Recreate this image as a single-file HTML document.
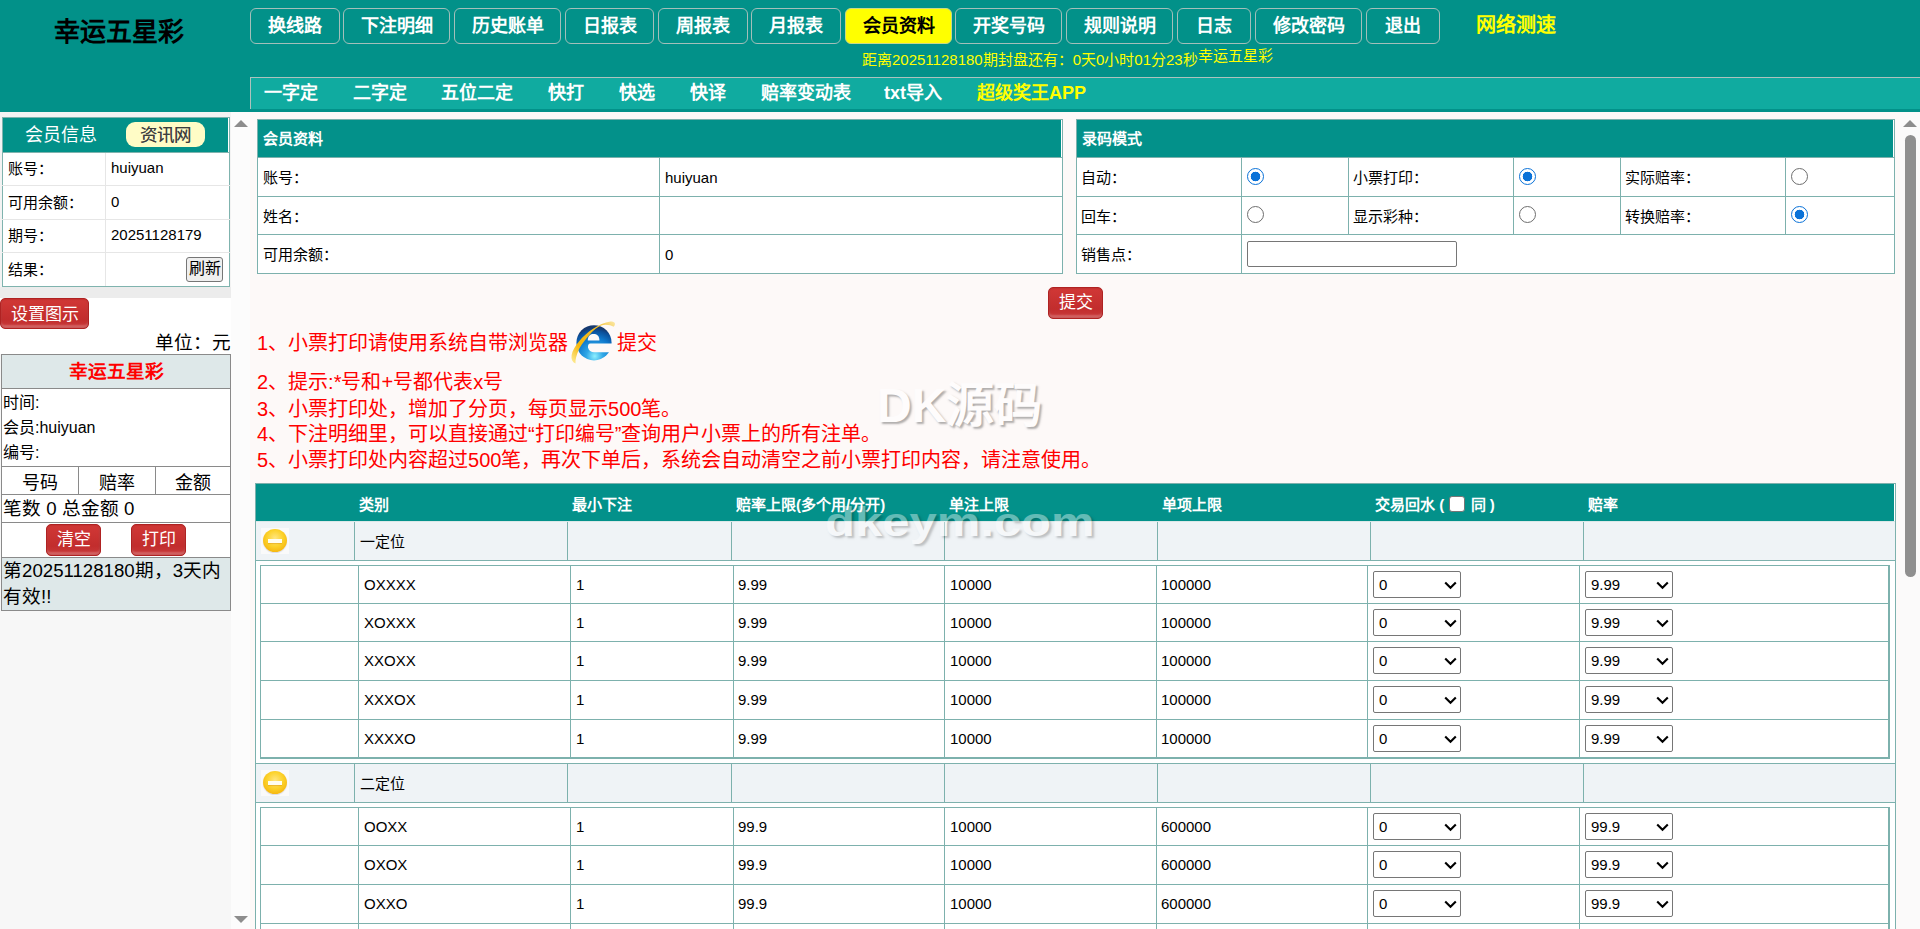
<!DOCTYPE html>
<html lang="zh-CN"><head><meta charset="utf-8">
<style>
*{box-sizing:border-box}
html,body{margin:0;padding:0}
body{width:1920px;height:929px;overflow:hidden;position:relative;font-family:"Liberation Sans",sans-serif;background:#fdf9f8;color:#000}
.abs{position:absolute}
#hd{position:absolute;left:0;top:0;width:1920px;height:112px;background:#029189}
#logo{position:absolute;left:54px;top:15px;font-size:26px;font-weight:bold;line-height:34px;color:#000;white-space:nowrap}
.nb{position:absolute;top:8px;height:36px;border:1px solid #a3bfba;border-radius:6px;color:#fff;font-weight:bold;font-size:18px;line-height:34px;text-align:center;white-space:nowrap}
.nb.on{background:#ffff00;color:#000;border-color:#c8d88a}
#speed{position:absolute;left:1476px;top:10px;font-size:20px;font-weight:bold;color:#ffff00;line-height:30px;white-space:nowrap}
#cd{position:absolute;left:862px;top:49px;font-size:15px;color:#ffff00;line-height:22px;white-space:nowrap}
#cd2{position:absolute;left:1198px;top:45px;font-size:15px;color:#ffff00;line-height:22px;white-space:nowrap}
#sub{position:absolute;left:250px;top:77px;width:1670px;height:32px;background:#10aba0;border-top:1px solid #adc2bd;border-left:1px solid #adc2bd}
.sn{position:absolute;top:4px;font-size:18px;font-weight:bold;color:#fff;line-height:22px;white-space:nowrap}

#side{position:absolute;left:0;top:112px;width:250px;height:817px;background:#f7f7f7}
#mi{position:absolute;left:0;top:0;width:231px;height:186px;background:#f3f3f3}
.mt{position:absolute;left:2px;top:5px;width:228px;border-collapse:collapse;font-size:15px;table-layout:fixed}
.mt td{padding:0}
.mt tr.h td{background:#029189;height:35px;border:1px solid #7fb3ae;position:relative;box-shadow:inset -1px 0 #fff}
.mt .t{position:absolute;left:22px;top:6px;font-size:18px;color:#fff;line-height:22px}
.mt .zx{position:absolute;left:123px;top:4px;width:79px;height:25px;background:#fffcc6;border-radius:9px;color:#3d3d3d;font-size:17.5px;line-height:27px;text-align:center;letter-spacing:-0.3px;text-shadow:0 0 .5px #777}
.mt td.l,.mt td.r{background:#fff;border:1px solid #e6e6e6;position:relative;padding-bottom:3px}
.mt tr.r1 td{height:33px}.mt tr.r2 td{height:34px}.mt tr.r3 td{height:33px}.mt tr.r4 td{height:34px}
.mt td.l{width:92px;padding-left:5px;border-left:1px solid #7fb3ae}
.mt td.r{padding-left:5px;border-right:1px solid #7fb3ae}
.mt tr.r4 td.l,.mt tr.r4 td.r{border-bottom:1px solid #7fb3ae}
.rf{position:absolute;right:6px;top:4px;width:37px;height:25px;background:#efefef;border:1px solid #767676;border-radius:3px;font-size:16px;line-height:22px;text-align:center}
#band{position:absolute;left:0;top:175px;width:231px;height:11px;background:#ececec}
#wbg{position:absolute;left:0;top:186px;width:231px;height:56px;background:#fff}
.rbtn{position:absolute;background:linear-gradient(#d13836,#c22d2d 70%,#c93a3a);border:1px solid #b02222;border-radius:5px;color:#fff;text-align:center;box-shadow:inset 0 0 2px rgba(90,0,0,.35),inset 0 -3px 2px rgba(255,255,255,.22)}
#setbtn{left:0;top:186px;width:89px;height:31px;font-size:17px;line-height:31px}
#unit{position:absolute;left:140px;top:219px;width:91px;text-align:right;font-size:18.67px;line-height:24px;white-space:nowrap}
#tk{position:absolute;left:1px;top:242px;width:230px;border-collapse:collapse;background:#fff;table-layout:fixed}
#tk td{border:1px solid #8a8a8a;padding:0}
#tk tr.tt td{height:34px;padding-bottom:4px;background:#dee8e9;color:#f00;font-weight:bold;font-size:18.67px;text-align:center}
#tk tr.inf td{height:78px;font-size:16px;padding-left:1px;line-height:25px}
#tk tr.cols td{height:28px;font-size:18px;text-align:center}
#tk tr.sum td{height:28px;font-size:18.67px;padding-left:1px;line-height:22px;padding-top:1px}
#tk tr.btns td{height:35px;position:relative}
#tk .btns .rbtn{top:1px;width:55px;height:32px;font-size:17px;line-height:30px}
#tk tr.last td{height:52px;background:#dee8e9;font-size:18.67px;line-height:26px;padding-left:1px}
#sb1{position:absolute;left:231px;top:0;width:19px;height:817px;background:#fcfcfc}
.up{position:absolute;left:3px;top:8px;width:0;height:0;border-left:7px solid transparent;border-right:7px solid transparent;border-bottom:7px solid #8d8d8d}
.dn{position:absolute;left:3px;top:804px;width:0;height:0;border-left:7px solid transparent;border-right:7px solid transparent;border-top:7px solid #8d8d8d}

#main{position:absolute;left:0;top:0;width:1920px;height:929px;pointer-events:none}
.a{position:absolute}
.tx{position:absolute;white-space:nowrap}
.hdt{height:38px;line-height:38px;font-size:15px;font-weight:bold;color:#fff}
.ct{height:38px;line-height:40px;font-size:15px}
.note{font-size:20px;color:#f00;line-height:30px}
.ght{height:37px;line-height:41px;font-size:15px;font-weight:bold;color:#fff}
.gt{font-size:15px}
.it{font-size:15px}
.cb{display:inline-block;width:16px;height:16px;background:#fff;border:1px solid #767676;border-radius:3px;vertical-align:-2px;margin:0 1px}
.gico{position:absolute;width:28px;height:26px;background:#fafafa}
.gico:before{content:"";position:absolute;left:2px;top:1px;width:24px;height:23px;border-radius:50%;background:radial-gradient(circle at 50% 40%,#ffe680 0,#fcd22a 45%,#f6b812 75%,#eea60c 92%,#f4c25a 100%);box-shadow:0 1px 1px rgba(120,120,160,.25)}
.gico:after{content:"";position:absolute;left:7px;top:11px;width:14px;height:4px;background:#fffdf0;box-shadow:0 1px 1px rgba(200,120,0,.35)}
.radio{position:absolute;width:17px;height:17px;border-radius:50%;border:1.8px solid #6e6e6e;background:#fff}
.radio.on{border:1.7px solid #0a72d8;background:radial-gradient(circle,#0a72d8 0 4.6px,#fff 5.1px)}
.inp{position:absolute;width:210px;height:26px;border:1px solid #767676;border-radius:2px;background:#fff}
.sel{position:absolute;width:88px;height:27px;border:1px solid #767676;border-radius:2px;background:#fff;font-size:15px;line-height:25px;padding-left:5px}
.chev{position:absolute;left:70px;top:9px}
#ie{position:absolute;width:44px;height:44px}
#sb2{position:absolute;left:1900px;top:112px;width:20px;height:817px;background:#fbfafa}
.up2{position:absolute;left:3px;top:8px;width:0;height:0;border-left:7px solid transparent;border-right:7px solid transparent;border-bottom:7px solid #8d8d8d}
.thumb{position:absolute;left:5px;top:23px;width:11px;height:442px;border-radius:6px;background:#8f8f8f}
#wm1{position:absolute;left:877px;top:376px;font-size:48px;line-height:60px;font-weight:bold;color:#fff;opacity:.6;text-shadow:2px 2px 2px rgba(0,0,0,.5);white-space:nowrap}
#wm2{position:absolute;left:825px;top:496px;font-size:40px;line-height:52px;font-weight:bold;color:#fff;opacity:.38;text-shadow:2px 2px 2px rgba(0,0,0,.55);white-space:nowrap;transform:scaleX(1.225);transform-origin:0 0}
</style></head><body>
<div id="hd">
  <div id="logo">幸运五星彩</div>
  <div class="nb" style="left:250px;width:90px">换线路</div>
  <div class="nb" style="left:343px;width:107px">下注明细</div>
  <div class="nb" style="left:454px;width:107px">历史账单</div>
  <div class="nb" style="left:565px;width:89px">日报表</div>
  <div class="nb" style="left:658px;width:90px">周报表</div>
  <div class="nb" style="left:751px;width:90px">月报表</div>
  <div class="nb on" style="left:845px;width:107px">会员资料</div>
  <div class="nb" style="left:955px;width:107px">开奖号码</div>
  <div class="nb" style="left:1066px;width:107px">规则说明</div>
  <div class="nb" style="left:1177px;width:74px">日志</div>
  <div class="nb" style="left:1255px;width:107px">修改密码</div>
  <div class="nb" style="left:1366px;width:74px">退出</div>
  <div id="speed">网络测速</div>
  <div id="cd">距离20251128180期封盘还有：0天0小时01分23秒</div>
  <div id="cd2">幸运五星彩</div>
  <div id="sub">
    <div class="sn" style="left:13px">一字定</div>
    <div class="sn" style="left:102px">二字定</div>
    <div class="sn" style="left:190px">五位二定</div>
    <div class="sn" style="left:297px">快打</div>
    <div class="sn" style="left:368px">快选</div>
    <div class="sn" style="left:439px">快译</div>
    <div class="sn" style="left:510px">赔率变动表</div>
    <div class="sn" style="left:633px">txt导入</div>
    <div class="sn" style="left:726px;color:#ffff00">超级奖王APP</div>
  </div>
</div>
<div id="side">
  <div id="mi">
    <table class="mt"><col style="width:103px"><col>
      <tr class="h"><td colspan="2"><span class="t">会员信息</span><span class="zx">资讯网</span></td></tr>
      <tr class="r1"><td class="l">账号：</td><td class="r">huiyuan</td></tr>
      <tr class="r2"><td class="l">可用余额：</td><td class="r">0</td></tr>
      <tr class="r3"><td class="l">期号：</td><td class="r">20251128179</td></tr>
      <tr class="r4"><td class="l">结果：</td><td class="r"><span class="rf">刷新</span></td></tr>
    </table>
  </div>
  <div id="band"></div>
  <div id="wbg"></div>
  <div id="setbtn" class="rbtn">设置图示</div>
  <div id="unit">单位：元</div>
  <table id="tk"><col style="width:77px"><col style="width:77px"><col>
    <tr class="tt"><td colspan="3">幸运五星彩</td></tr>
    <tr class="inf"><td colspan="3"><div>时间:</div><div>会员:huiyuan</div><div>编号:</div></td></tr>
    <tr class="cols"><td>号码</td><td>赔率</td><td>金额</td></tr>
    <tr class="sum"><td colspan="3">笔数 0 总金额 0</td></tr>
    <tr class="btns"><td colspan="3"><span class="rbtn" style="left:44px">清空</span><span class="rbtn" style="left:129px">打印</span></td></tr>
    <tr class="last"><td colspan="3">第20251128180期，3天内有效!!</td></tr>
  </table>
  <div id="sb1"><div class="up"></div><div class="dn"></div></div>
</div>

<div id="main">
<div class="a" style="left:257px;top:119px;width:806px;height:155px;background:#fff;"></div>
<div class="a" style="left:258px;top:120px;width:804px;height:37px;background:#03918a;"></div>
<div class="a" style="left:1061px;top:120px;width:1px;height:37px;background:#ffffff;"></div>
<div class="a" style="left:257px;top:119px;width:806px;height:1px;background:#7db1ad;"></div>
<div class="a" style="left:257px;top:157px;width:806px;height:1px;background:#7db1ad;"></div>
<div class="a" style="left:257px;top:196px;width:806px;height:1px;background:#7db1ad;"></div>
<div class="a" style="left:257px;top:234px;width:806px;height:1px;background:#7db1ad;"></div>
<div class="a" style="left:257px;top:273px;width:806px;height:1px;background:#7db1ad;"></div>
<div class="a" style="left:257px;top:119px;width:1px;height:155px;background:#7db1ad;"></div>
<div class="a" style="left:1062px;top:119px;width:1px;height:155px;background:#7db1ad;"></div>
<div class="a" style="left:659px;top:157px;width:1px;height:117px;background:#7db1ad;"></div>
<div class="tx hdt" style="left:263px;top:120px;">会员资料</div>
<div class="tx ct" style="left:263px;top:158px;">账号：</div>
<div class="tx ct" style="left:665px;top:158px;">huiyuan</div>
<div class="tx ct" style="left:263px;top:197px;">姓名：</div>
<div class="tx ct" style="left:665px;top:197px;"></div>
<div class="tx ct" style="left:263px;top:235px;">可用余额：</div>
<div class="tx ct" style="left:665px;top:235px;">0</div>
<div class="a" style="left:1076px;top:119px;width:819px;height:155px;background:#fff;"></div>
<div class="a" style="left:1077px;top:120px;width:817px;height:37px;background:#03918a;"></div>
<div class="a" style="left:1893px;top:120px;width:1px;height:37px;background:#ffffff;"></div>
<div class="a" style="left:1076px;top:119px;width:819px;height:1px;background:#7db1ad;"></div>
<div class="a" style="left:1076px;top:157px;width:819px;height:1px;background:#7db1ad;"></div>
<div class="a" style="left:1076px;top:196px;width:819px;height:1px;background:#7db1ad;"></div>
<div class="a" style="left:1076px;top:234px;width:819px;height:1px;background:#7db1ad;"></div>
<div class="a" style="left:1076px;top:273px;width:819px;height:1px;background:#7db1ad;"></div>
<div class="a" style="left:1076px;top:119px;width:1px;height:155px;background:#7db1ad;"></div>
<div class="a" style="left:1894px;top:119px;width:1px;height:155px;background:#7db1ad;"></div>
<div class="a" style="left:1241px;top:157px;width:1px;height:117px;background:#7db1ad;"></div>
<div class="a" style="left:1348px;top:157px;width:1px;height:77px;background:#7db1ad;"></div>
<div class="a" style="left:1513px;top:157px;width:1px;height:77px;background:#7db1ad;"></div>
<div class="a" style="left:1620px;top:157px;width:1px;height:77px;background:#7db1ad;"></div>
<div class="a" style="left:1785px;top:157px;width:1px;height:77px;background:#7db1ad;"></div>
<div class="tx hdt" style="left:1082px;top:120px;">录码模式</div>
<div class="tx ct" style="left:1081px;top:158px;">自动：</div>
<div class="radio on" style="left:1247px;top:168px"></div>
<div class="tx ct" style="left:1353px;top:158px;">小票打印：</div>
<div class="radio on" style="left:1519px;top:168px"></div>
<div class="tx ct" style="left:1625px;top:158px;">实际赔率：</div>
<div class="radio" style="left:1791px;top:168px"></div>
<div class="tx ct" style="left:1081px;top:197px;">回车：</div>
<div class="radio" style="left:1247px;top:206px"></div>
<div class="tx ct" style="left:1353px;top:197px;">显示彩种：</div>
<div class="radio" style="left:1519px;top:206px"></div>
<div class="tx ct" style="left:1625px;top:197px;">转换赔率：</div>
<div class="radio on" style="left:1791px;top:206px"></div>
<div class="tx ct" style="left:1081px;top:235px;">销售点：</div>
<div class="inp" style="left:1247px;top:241px"></div>
<div class="rbtn" style="left:1048px;top:287px;width:55px;height:32px;font-size:17px;line-height:29px">提交</div>
<div class="tx note" style="left:257px;top:328px;">1、小票打印请使用系统自带浏览器</div>
<div class="tx note" style="left:617px;top:328px;">提交</div>
<div id="ie" style="left:569px;top:320px"><svg width="47" height="46" viewBox="0 0 47 46">
<defs>
<radialGradient id="gb" cx="0.52" cy="0.88" r="0.8"><stop offset="0" stop-color="#8ef0ff"/><stop offset="0.3" stop-color="#2fa6e6"/><stop offset="0.65" stop-color="#0f78cc"/><stop offset="0.9" stop-color="#0b4f9a"/><stop offset="1" stop-color="#163a70"/></radialGradient>
<linearGradient id="gy" x1="0" y1="1" x2="1" y2="0"><stop offset="0" stop-color="#fff0a0"/><stop offset="0.3" stop-color="#f6b70c"/><stop offset="0.7" stop-color="#f4bb22"/><stop offset="1" stop-color="#fbe9a8"/></linearGradient>
</defs>
<circle cx="25" cy="22.8" r="17.6" fill="url(#gb)"/>
<path d="M18.8 20.4 C18.8 15.5 21.5 13.9 24.6 13.9 C27.8 13.9 30.4 15.5 30.4 20.4 Z" fill="#fdf9f8"/>
<path d="M43 23.6 L21.5 23.6 C19.2 23.6 18.8 25.5 19 27.5 C19.5 30.5 22 32.2 25.5 32.2 L43 32.2 L43 23.6 Z" fill="#fdf9f8"/>
<path d="M6.5 43.5 C0 41 1.5 31 10.4 21 C17 13 30 3 41.4 1.6 C44 1.3 46.5 2.5 45.9 4.6 C45.5 6 44.6 6.8 44.6 6.8 C42 5 36 4 32.3 5.5 C26 8 22.5 12.5 19.5 16 C14 22.5 11 27 9.7 30 C7.5 35 6.2 40 6.5 43.5 Z" fill="url(#gy)"/>
</svg></div>
<div class="tx note" style="left:257px;top:367px;">2、提示:*号和+号都代表x号</div>
<div class="tx note" style="left:257px;top:394px;">3、小票打印处，增加了分页，每页显示500笔。</div>
<div class="tx note" style="left:257px;top:419px;">4、下注明细里，可以直接通过“打印编号”查询用户小票上的所有注单。</div>
<div class="tx note" style="left:257px;top:445px;">5、小票打印处内容超过500笔，再次下单后，系统会自动清空之前小票打印内容，请注意使用。</div>
<div class="a" style="left:255px;top:483px;width:1641px;height:38px;background:#03918a;"></div>
<div class="a" style="left:255px;top:483px;width:1641px;height:1px;background:#7db1ad;"></div>
<div class="a" style="left:255px;top:483px;width:1px;height:446px;background:#7db1ad;"></div>
<div class="a" style="left:1895px;top:483px;width:1px;height:446px;background:#7db1ad;"></div>
<div class="a" style="left:1894px;top:484px;width:1px;height:37px;background:#ffffff;"></div>
<div class="tx ght" style="left:359px;top:484px;">类别</div>
<div class="tx ght" style="left:572px;top:484px;">最小下注</div>
<div class="tx ght" style="left:736px;top:484px;">赔率上限(多个用/分开)</div>
<div class="tx ght" style="left:949px;top:484px;">单注上限</div>
<div class="tx ght" style="left:1162px;top:484px;">单项上限</div>
<div class="tx ght" style="left:1375px;top:484px;">交易回水 ( <span class="cb"></span> 同 )</div>
<div class="tx ght" style="left:1588px;top:484px;">赔率</div>
<div class="a" style="left:256px;top:561px;width:1639px;height:368px;background:#fff;"></div>
<div class="a" style="left:256px;top:521px;width:1639px;height:1px;background:#dbe8e8;"></div>
<div class="a" style="left:256px;top:522px;width:1639px;height:38px;background:#eff3f6;"></div>
<div class="a" style="left:255px;top:560px;width:1641px;height:1px;background:#7db1ad;"></div>
<div class="a" style="left:354px;top:522px;width:1px;height:38px;background:#7db1ad;"></div>
<div class="a" style="left:567px;top:522px;width:1px;height:38px;background:#7db1ad;"></div>
<div class="a" style="left:731px;top:522px;width:1px;height:38px;background:#7db1ad;"></div>
<div class="a" style="left:944px;top:522px;width:1px;height:38px;background:#7db1ad;"></div>
<div class="a" style="left:1157px;top:522px;width:1px;height:38px;background:#7db1ad;"></div>
<div class="a" style="left:1370px;top:522px;width:1px;height:38px;background:#7db1ad;"></div>
<div class="a" style="left:1583px;top:522px;width:1px;height:38px;background:#7db1ad;"></div>
<div class="gico" style="left:261px;top:528px"></div>
<div class="tx gt" style="left:360px;top:522px;height:38px;line-height:40px">一定位</div>
<div class="a" style="left:260px;top:565px;width:1630px;height:194px;background:#fff;"></div>
<div class="a" style="left:260px;top:565px;width:1630px;height:1px;background:#7db1ad;"></div>
<div class="a" style="left:260px;top:565px;width:1px;height:194px;background:#7db1ad;"></div>
<div class="a" style="left:1888px;top:565px;width:2px;height:194px;background:#7db1ad;"></div>
<div class="a" style="left:260px;top:603px;width:1630px;height:1px;background:#7db1ad;"></div>
<div class="a" style="left:260px;top:641px;width:1630px;height:1px;background:#7db1ad;"></div>
<div class="a" style="left:260px;top:680px;width:1630px;height:1px;background:#7db1ad;"></div>
<div class="a" style="left:260px;top:719px;width:1630px;height:1px;background:#7db1ad;"></div>
<div class="a" style="left:260px;top:757px;width:1630px;height:2px;background:#7db1ad;"></div>
<div class="a" style="left:358px;top:565px;width:1px;height:192px;background:#7db1ad;"></div>
<div class="a" style="left:570px;top:565px;width:1px;height:192px;background:#7db1ad;"></div>
<div class="a" style="left:733px;top:565px;width:1px;height:192px;background:#7db1ad;"></div>
<div class="a" style="left:944px;top:565px;width:1px;height:192px;background:#7db1ad;"></div>
<div class="a" style="left:1156px;top:565px;width:1px;height:192px;background:#7db1ad;"></div>
<div class="a" style="left:1367px;top:565px;width:1px;height:192px;background:#7db1ad;"></div>
<div class="a" style="left:1579px;top:565px;width:1px;height:192px;background:#7db1ad;"></div>
<div class="tx it" style="left:364px;top:566px;height:37px;line-height:37px">OXXXX</div>
<div class="tx it" style="left:576px;top:566px;height:37px;line-height:37px">1</div>
<div class="tx it" style="left:738px;top:566px;height:37px;line-height:37px">9.99</div>
<div class="tx it" style="left:950px;top:566px;height:37px;line-height:37px">10000</div>
<div class="tx it" style="left:1161px;top:566px;height:37px;line-height:37px">100000</div>
<div class="sel" style="left:1373px;top:571px">0<svg class="chev" width="13" height="9" viewBox="0 0 13 9"><path d="M1.2 1.5 L6.5 6.8 L11.8 1.5" fill="none" stroke="#000" stroke-width="2.1"/></svg></div>
<div class="sel" style="left:1585px;top:571px">9.99<svg class="chev" width="13" height="9" viewBox="0 0 13 9"><path d="M1.2 1.5 L6.5 6.8 L11.8 1.5" fill="none" stroke="#000" stroke-width="2.1"/></svg></div>
<div class="tx it" style="left:364px;top:604px;height:37px;line-height:37px">XOXXX</div>
<div class="tx it" style="left:576px;top:604px;height:37px;line-height:37px">1</div>
<div class="tx it" style="left:738px;top:604px;height:37px;line-height:37px">9.99</div>
<div class="tx it" style="left:950px;top:604px;height:37px;line-height:37px">10000</div>
<div class="tx it" style="left:1161px;top:604px;height:37px;line-height:37px">100000</div>
<div class="sel" style="left:1373px;top:609px">0<svg class="chev" width="13" height="9" viewBox="0 0 13 9"><path d="M1.2 1.5 L6.5 6.8 L11.8 1.5" fill="none" stroke="#000" stroke-width="2.1"/></svg></div>
<div class="sel" style="left:1585px;top:609px">9.99<svg class="chev" width="13" height="9" viewBox="0 0 13 9"><path d="M1.2 1.5 L6.5 6.8 L11.8 1.5" fill="none" stroke="#000" stroke-width="2.1"/></svg></div>
<div class="tx it" style="left:364px;top:642px;height:38px;line-height:38px">XXOXX</div>
<div class="tx it" style="left:576px;top:642px;height:38px;line-height:38px">1</div>
<div class="tx it" style="left:738px;top:642px;height:38px;line-height:38px">9.99</div>
<div class="tx it" style="left:950px;top:642px;height:38px;line-height:38px">10000</div>
<div class="tx it" style="left:1161px;top:642px;height:38px;line-height:38px">100000</div>
<div class="sel" style="left:1373px;top:647px">0<svg class="chev" width="13" height="9" viewBox="0 0 13 9"><path d="M1.2 1.5 L6.5 6.8 L11.8 1.5" fill="none" stroke="#000" stroke-width="2.1"/></svg></div>
<div class="sel" style="left:1585px;top:647px">9.99<svg class="chev" width="13" height="9" viewBox="0 0 13 9"><path d="M1.2 1.5 L6.5 6.8 L11.8 1.5" fill="none" stroke="#000" stroke-width="2.1"/></svg></div>
<div class="tx it" style="left:364px;top:681px;height:38px;line-height:38px">XXXOX</div>
<div class="tx it" style="left:576px;top:681px;height:38px;line-height:38px">1</div>
<div class="tx it" style="left:738px;top:681px;height:38px;line-height:38px">9.99</div>
<div class="tx it" style="left:950px;top:681px;height:38px;line-height:38px">10000</div>
<div class="tx it" style="left:1161px;top:681px;height:38px;line-height:38px">100000</div>
<div class="sel" style="left:1373px;top:686px">0<svg class="chev" width="13" height="9" viewBox="0 0 13 9"><path d="M1.2 1.5 L6.5 6.8 L11.8 1.5" fill="none" stroke="#000" stroke-width="2.1"/></svg></div>
<div class="sel" style="left:1585px;top:686px">9.99<svg class="chev" width="13" height="9" viewBox="0 0 13 9"><path d="M1.2 1.5 L6.5 6.8 L11.8 1.5" fill="none" stroke="#000" stroke-width="2.1"/></svg></div>
<div class="tx it" style="left:364px;top:720px;height:37px;line-height:37px">XXXXO</div>
<div class="tx it" style="left:576px;top:720px;height:37px;line-height:37px">1</div>
<div class="tx it" style="left:738px;top:720px;height:37px;line-height:37px">9.99</div>
<div class="tx it" style="left:950px;top:720px;height:37px;line-height:37px">10000</div>
<div class="tx it" style="left:1161px;top:720px;height:37px;line-height:37px">100000</div>
<div class="sel" style="left:1373px;top:725px">0<svg class="chev" width="13" height="9" viewBox="0 0 13 9"><path d="M1.2 1.5 L6.5 6.8 L11.8 1.5" fill="none" stroke="#000" stroke-width="2.1"/></svg></div>
<div class="sel" style="left:1585px;top:725px">9.99<svg class="chev" width="13" height="9" viewBox="0 0 13 9"><path d="M1.2 1.5 L6.5 6.8 L11.8 1.5" fill="none" stroke="#000" stroke-width="2.1"/></svg></div>
<div class="a" style="left:255px;top:763px;width:1641px;height:1px;background:#7db1ad;"></div>
<div class="a" style="left:256px;top:764px;width:1639px;height:38px;background:#eff3f6;"></div>
<div class="a" style="left:255px;top:802px;width:1641px;height:1px;background:#7db1ad;"></div>
<div class="a" style="left:354px;top:764px;width:1px;height:38px;background:#7db1ad;"></div>
<div class="a" style="left:567px;top:764px;width:1px;height:38px;background:#7db1ad;"></div>
<div class="a" style="left:731px;top:764px;width:1px;height:38px;background:#7db1ad;"></div>
<div class="a" style="left:944px;top:764px;width:1px;height:38px;background:#7db1ad;"></div>
<div class="a" style="left:1157px;top:764px;width:1px;height:38px;background:#7db1ad;"></div>
<div class="a" style="left:1370px;top:764px;width:1px;height:38px;background:#7db1ad;"></div>
<div class="a" style="left:1583px;top:764px;width:1px;height:38px;background:#7db1ad;"></div>
<div class="gico" style="left:261px;top:770px"></div>
<div class="tx gt" style="left:360px;top:764px;height:38px;line-height:40px">二定位</div>
<div class="a" style="left:260px;top:807px;width:1630px;height:122px;background:#fff;"></div>
<div class="a" style="left:260px;top:807px;width:1630px;height:1px;background:#7db1ad;"></div>
<div class="a" style="left:260px;top:807px;width:1px;height:156px;background:#7db1ad;"></div>
<div class="a" style="left:1888px;top:807px;width:2px;height:156px;background:#7db1ad;"></div>
<div class="a" style="left:260px;top:845px;width:1630px;height:1px;background:#7db1ad;"></div>
<div class="a" style="left:260px;top:884px;width:1630px;height:1px;background:#7db1ad;"></div>
<div class="a" style="left:260px;top:923px;width:1630px;height:1px;background:#7db1ad;"></div>
<div class="a" style="left:260px;top:961px;width:1630px;height:2px;background:#7db1ad;"></div>
<div class="a" style="left:358px;top:807px;width:1px;height:154px;background:#7db1ad;"></div>
<div class="a" style="left:570px;top:807px;width:1px;height:154px;background:#7db1ad;"></div>
<div class="a" style="left:733px;top:807px;width:1px;height:154px;background:#7db1ad;"></div>
<div class="a" style="left:944px;top:807px;width:1px;height:154px;background:#7db1ad;"></div>
<div class="a" style="left:1156px;top:807px;width:1px;height:154px;background:#7db1ad;"></div>
<div class="a" style="left:1367px;top:807px;width:1px;height:154px;background:#7db1ad;"></div>
<div class="a" style="left:1579px;top:807px;width:1px;height:154px;background:#7db1ad;"></div>
<div class="tx it" style="left:364px;top:808px;height:37px;line-height:37px">OOXX</div>
<div class="tx it" style="left:576px;top:808px;height:37px;line-height:37px">1</div>
<div class="tx it" style="left:738px;top:808px;height:37px;line-height:37px">99.9</div>
<div class="tx it" style="left:950px;top:808px;height:37px;line-height:37px">10000</div>
<div class="tx it" style="left:1161px;top:808px;height:37px;line-height:37px">600000</div>
<div class="sel" style="left:1373px;top:813px">0<svg class="chev" width="13" height="9" viewBox="0 0 13 9"><path d="M1.2 1.5 L6.5 6.8 L11.8 1.5" fill="none" stroke="#000" stroke-width="2.1"/></svg></div>
<div class="sel" style="left:1585px;top:813px">99.9<svg class="chev" width="13" height="9" viewBox="0 0 13 9"><path d="M1.2 1.5 L6.5 6.8 L11.8 1.5" fill="none" stroke="#000" stroke-width="2.1"/></svg></div>
<div class="tx it" style="left:364px;top:846px;height:38px;line-height:38px">OXOX</div>
<div class="tx it" style="left:576px;top:846px;height:38px;line-height:38px">1</div>
<div class="tx it" style="left:738px;top:846px;height:38px;line-height:38px">99.9</div>
<div class="tx it" style="left:950px;top:846px;height:38px;line-height:38px">10000</div>
<div class="tx it" style="left:1161px;top:846px;height:38px;line-height:38px">600000</div>
<div class="sel" style="left:1373px;top:851px">0<svg class="chev" width="13" height="9" viewBox="0 0 13 9"><path d="M1.2 1.5 L6.5 6.8 L11.8 1.5" fill="none" stroke="#000" stroke-width="2.1"/></svg></div>
<div class="sel" style="left:1585px;top:851px">99.9<svg class="chev" width="13" height="9" viewBox="0 0 13 9"><path d="M1.2 1.5 L6.5 6.8 L11.8 1.5" fill="none" stroke="#000" stroke-width="2.1"/></svg></div>
<div class="tx it" style="left:364px;top:885px;height:38px;line-height:38px">OXXO</div>
<div class="tx it" style="left:576px;top:885px;height:38px;line-height:38px">1</div>
<div class="tx it" style="left:738px;top:885px;height:38px;line-height:38px">99.9</div>
<div class="tx it" style="left:950px;top:885px;height:38px;line-height:38px">10000</div>
<div class="tx it" style="left:1161px;top:885px;height:38px;line-height:38px">600000</div>
<div class="sel" style="left:1373px;top:890px">0<svg class="chev" width="13" height="9" viewBox="0 0 13 9"><path d="M1.2 1.5 L6.5 6.8 L11.8 1.5" fill="none" stroke="#000" stroke-width="2.1"/></svg></div>
<div class="sel" style="left:1585px;top:890px">99.9<svg class="chev" width="13" height="9" viewBox="0 0 13 9"><path d="M1.2 1.5 L6.5 6.8 L11.8 1.5" fill="none" stroke="#000" stroke-width="2.1"/></svg></div>
<div class="tx it" style="left:364px;top:924px;height:37px;line-height:37px">XOOX</div>
<div class="tx it" style="left:576px;top:924px;height:37px;line-height:37px">1</div>
<div class="tx it" style="left:738px;top:924px;height:37px;line-height:37px">99.9</div>
<div class="tx it" style="left:950px;top:924px;height:37px;line-height:37px">10000</div>
<div class="tx it" style="left:1161px;top:924px;height:37px;line-height:37px">600000</div>
<div class="sel" style="left:1373px;top:929px">0<svg class="chev" width="13" height="9" viewBox="0 0 13 9"><path d="M1.2 1.5 L6.5 6.8 L11.8 1.5" fill="none" stroke="#000" stroke-width="2.1"/></svg></div>
<div class="sel" style="left:1585px;top:929px">99.9<svg class="chev" width="13" height="9" viewBox="0 0 13 9"><path d="M1.2 1.5 L6.5 6.8 L11.8 1.5" fill="none" stroke="#000" stroke-width="2.1"/></svg></div>
<div id="sb2"><div class="up2"></div><div class="thumb"></div></div>
<div id="wm1">DK源码</div><div id="wm2">dkeym.com</div>
</div><!--/MAIN-->
</body></html>
